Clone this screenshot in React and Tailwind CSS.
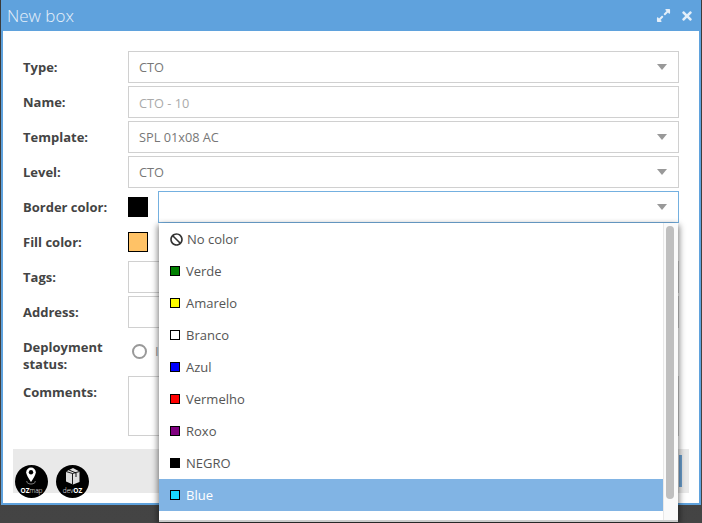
import React from 'react';
import { FaExpandAlt, FaTimes, FaBan } from 'react-icons/fa';

const colors = [
  { name: 'Verde', color: 'bg-[#008000]' },
  { name: 'Amarelo', color: 'bg-[#ffff00]' },
  { name: 'Branco', color: 'bg-white' },
  { name: 'Azul', color: 'bg-[#0000ff]' },
  { name: 'Vermelho', color: 'bg-[#ff0000]' },
  { name: 'Roxo', color: 'bg-[#800080]' },
  { name: 'NEGRO', color: 'bg-black' },
];

const Arrow = () => (
  <span className="w-0 h-0 border-x-[5px] border-x-transparent border-t-[6px] border-t-[#999]" />
);

const Select = ({ value, focused }) => (
  <div className={`flex-1 h-8 flex items-center justify-between pl-[10px] pr-[11px] border ${focused ? 'border-[#74b0e0]' : 'border-[#d0d0d0]'} text-[#777] text-[12.75px]`}>
    <span className="mt-[2px]">{value}</span>
    <Arrow />
  </div>
);

const Row = ({ label, children }) => (
  <div className="flex items-center h-8 mb-[3px]">
    <label className="w-[105px] pt-[2px] font-bold text-[#444]">{label}</label>
    {children}
  </div>
);

const Swatch = ({ className }) => <div className={`w-5 h-5 mr-[10px] border border-black ${className}`} />;

const Logo = ({ children, first, second }) => (
  <svg width="33" height="33" viewBox="0 0 33 33" className="shrink-0">
    <circle cx="16.5" cy="16.5" r="16.5" fill="#000" />
    {children}
    <text x="16.5" y="27.5" textAnchor="middle" fontSize="6.5" fill="#fff" fontFamily="'Open Sans', sans-serif">
      <tspan fontWeight={first.bold ? 700 : 300}>{first.text}</tspan>
      <tspan fontWeight={second.bold ? 700 : 300}>{second.text}</tspan>
    </text>
  </svg>
);

const ColorDropdown = () => (
  <div className="absolute left-px right-px top-8 h-[299px] bg-white border-b-2 border-[#ccc] shadow-[-2px_2px_6px_rgba(0,0,0,0.35),2px_2px_6px_rgba(0,0,0,0.35)] flex overflow-hidden z-10">
    <ul className="flex-1 text-[#555]">
      <li className="h-8 flex items-center pl-[11px] gap-[4px]">
        <FaBan size={13} className="text-[#333]" />
        <span className="mt-[2px]">No color</span>
      </li>
      {colors.map((c) => (
        <li key={c.name} className="h-8 flex items-center pl-[11px] gap-[6px]">
          <span className={`w-[10px] h-[10px] border border-black ${c.color}`} />
          <span className="mt-[2px]">{c.name}</span>
        </li>
      ))}
      <li className="h-8 flex items-center pl-[11px] gap-[6px] bg-[#81b4e4] text-white">
        <span className="w-[10px] h-[10px] border border-black bg-[#19d9ff]" />
        <span className="mt-[2px]">Blue</span>
      </li>
    </ul>
    <div className="w-[15px] bg-[#fafafa] border-l border-[#e8e8e8] pt-[3px] pl-[2px]">
      <div className="w-2 h-[273px] rounded-full bg-[#bfbfbf]" />
    </div>
  </div>
);

export default function App() {
  return (
    <div className="h-[523px] w-[702px] overflow-hidden bg-gradient-to-b from-[#3a3a3a] to-[#444] font-['Open_Sans',sans-serif] text-[13px]">
      <div className="w-[700px] h-[505px] ml-px bg-white border-x-2 border-b-2 border-[#5fa2dd] flex flex-col">
        <header className="h-[31px] -mx-[2px] bg-[#5fa2dd] flex items-center justify-between pl-[6px] pr-[7px] shrink-0">
          <h1 className="text-[#e6f0fa] text-[17px] font-light">New box</h1>
          <div className="flex items-center gap-[9px] text-[#e4eff9]">
            <FaExpandAlt size={15} />
            <FaTimes size={14} />
          </div>
        </header>

        <form className="pt-5 pl-5 pr-5 flex-1">
          <Row label="Type:"><Select value="CTO" /></Row>
          <Row label="Name:">
            <input readOnly placeholder="CTO - 10" className="flex-1 h-8 border border-[#d0d0d0] px-[10px] pt-[2px] text-[12.75px] placeholder:text-[#aaa] outline-none" />
          </Row>
          <Row label="Template:"><Select value="SPL 01x08 AC" /></Row>
          <Row label="Level:"><Select value="CTO" /></Row>
          <Row label="Border color:">
            <Swatch className="bg-black" />
            <div className="relative flex-1 flex">
              <Select focused />
              <ColorDropdown />
            </div>
          </Row>
          <Row label="Fill color:">
            <Swatch className="bg-[#ffc266]" />
          </Row>
          <Row label="Tags:">
            <div className="flex-1 h-8 border border-[#d0d0d0]" />
          </Row>
          <Row label="Address:">
            <div className="flex-1 h-8 border border-[#d0d0d0]" />
          </Row>
          <div className="flex mt-[11px] h-[37px]">
            <label className="w-[105px] font-bold text-[#444] leading-[17px]">Deployment<br />status:</label>
            <span className="mt-[5px] ml-[4px] w-[15px] h-[15px] rounded-full border-2 border-[#999]" />
            <span className="ml-2 mt-[3px] text-[#999]">I</span>
          </div>
          <div className="flex">
            <label className="w-[105px] font-bold text-[#444] mt-[7px]">Comments:</label>
            <div className="flex-1 h-[60px] border border-[#d0d0d0]" />
          </div>
        </form>

        <footer className="relative h-[44px] mx-[10px] mb-[10px] bg-[#e9e9e9] shrink-0 flex justify-end pr-[7px] pt-[6px]">
          <div className="w-[3px] h-8 bg-[#6a9dcc]" />
          <div className="absolute left-[2px] top-[16px] flex gap-[8px]">
            <Logo first={{ text: 'OZ', bold: true }} second={{ text: 'map' }}>
              <path d="M16 2.500a4.800 4.800 0 0 0-4.800 4.800c0 3 4.800 9.700 4.800 9.700s4.800-6.700 4.800-9.700A4.800 4.800 0 0 0 16 2.500z" fill="#fff" />
              <circle cx="16" cy="7.300" r="2.200" fill="#000" />
              <path d="M12 16c-1 1.500 1.500 3 4 3s5-1.500 4-3" stroke="#bbb" strokeWidth="0.7" fill="none" />
            </Logo>
            <Logo first={{ text: 'dev' }} second={{ text: 'OZ', bold: true }}>
              <path d="M10 6.500l7-3.500 6.500 3.500v10.500l-6.500 2.500-7-3z" fill="#ddd" />
              <path d="M16.500 8.500v11M10 6.500l6.500 2 7-2M13 5l7 3v4" stroke="#000" strokeWidth="0.9" fill="none" />
            </Logo>
          </div>
        </footer>
      </div>
    </div>
  );
}
